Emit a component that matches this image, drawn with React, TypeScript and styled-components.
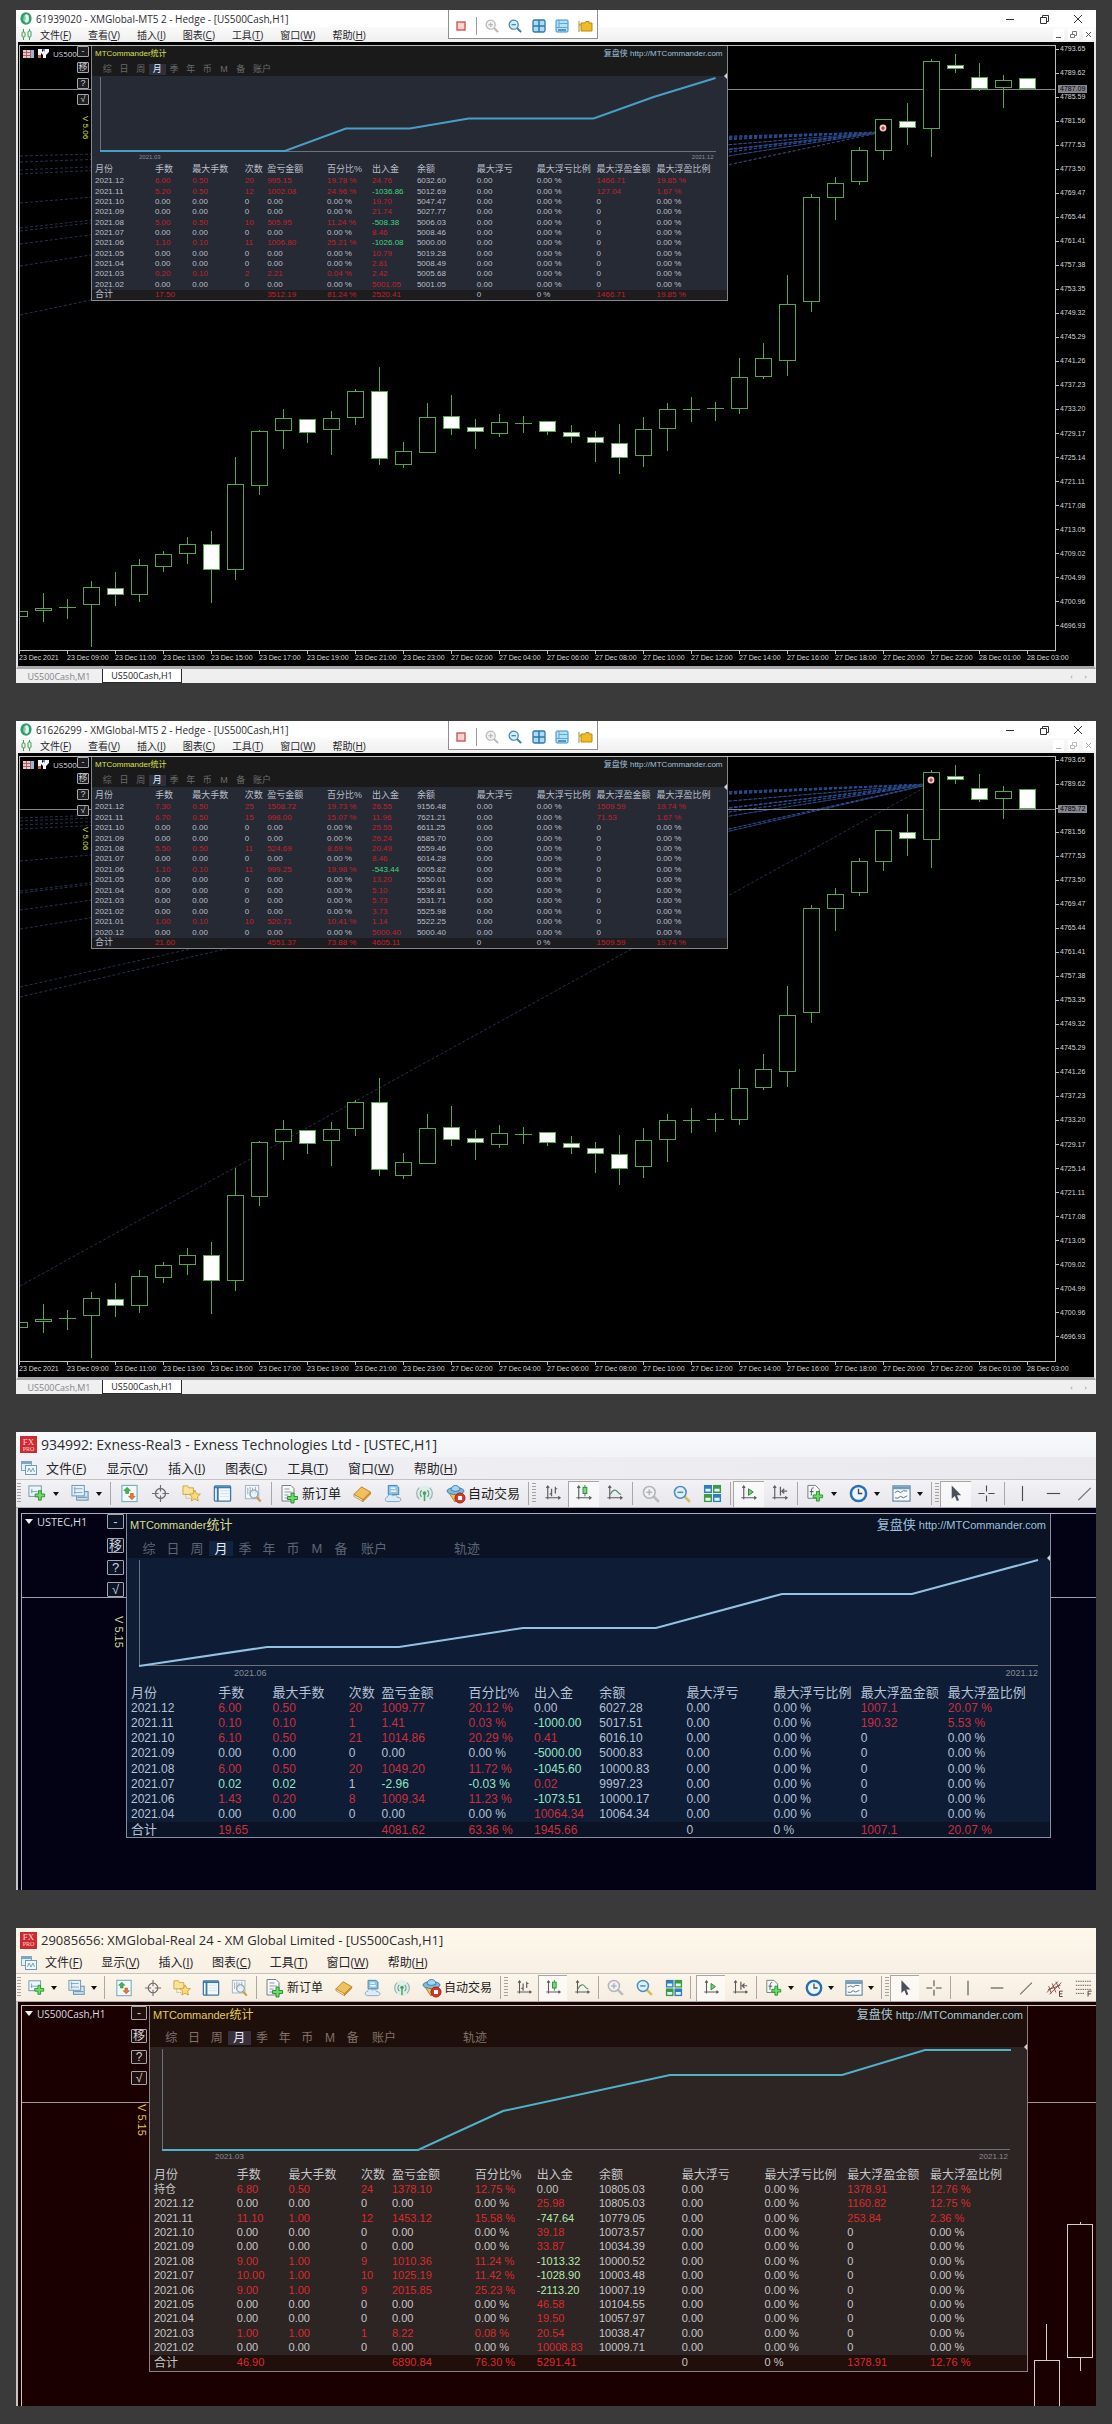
import React from 'react';
import styled, { createGlobalStyle, css } from 'styled-components';

const UI = '"Open Sans", "Noto Sans CJK SC", sans-serif';
const DATA = '"Liberation Sans", "Noto Sans CJK SC", sans-serif';

const GlobalStyle = createGlobalStyle`
  * { box-sizing: border-box; }
  body { margin: 0; background: #3a3a3b; font-family: ${UI}; }
  button { font: inherit; color: inherit; border: 0; padding: 0; margin: 0; background: none; cursor: pointer; }
  a { color: inherit; text-decoration: none; }
  svg { display: block; }
`;

/* ---------- themes ---------- */

interface Skin {
  titleH: number; titleFont: number; titleBg: string;
  menuH: number; menuFont: number; menuGap: number; menuIconW: number; menuBg: string;
  bg: string; grid: string;
  panelHead: string; panelBody: string; panelFoot: string; panelLine: string;
  text: string; red: string; green: string; accent: string; tab: string; tabOnBg: string; link: string; curve: string;
  font: number; headFont: number; brandFont: number; cjkFont: number; axisFont: number;
  brandH: number; tabsGap: number; tabsH: number; tabsW: number; tabsPad: number; tabsAfter: number;
  curveH: number; curveLabelH: number; theadGap: number; theadH: number; tbodyH: number; tfootH: number;
  labelLeft: number; labelRight: number; cellPad: number;
  sideW: number; toolW: number; toolH: number; toolGap: number; toolFirst: number; verGap: number; verFont: number; tagFont: number;
}

const mt5: Skin = {
  titleH: 17, titleFont: 10, titleBg: '#ffffff',
  menuH: 15, menuFont: 10, menuGap: 17, menuIconW: 15, menuBg: 'linear-gradient(#fafafa, #efefef)',
  bg: '#000000', grid: '#c4c4c4',
  panelHead: '#1a1a1b', panelBody: '#262a34', panelFoot: '#1d1d20', panelLine: '#83868d',
  text: '#b9bec9', red: '#c4202a', green: '#3fd67c', accent: '#dbe04c', tab: '#6b6b6d', tabOnBg: '#2b3040', link: '#9fc0dc', curve: '#479fc6',
  font: 8, headFont: 9, brandFont: 8, cjkFont: 8, axisFont: 6,
  brandH: 16, tabsGap: 0, tabsH: 14, tabsW: 150, tabsPad: 7, tabsAfter: 4,
  curveH: 77, curveLabelH: 8, theadGap: 2, theadH: 13, tbodyH: 114, tfootH: 10,
  labelLeft: 47, labelRight: 13, cellPad: 3,
  sideW: 71, toolW: 12, toolH: 11, toolGap: 5, toolFirst: 0, verGap: 11, verFont: 8, tagFont: 8,
};
const mt5b: Skin = { ...mt5, tbodyH: 136 };

const exness: Skin = {
  titleH: 25, titleFont: 14, titleBg: 'linear-gradient(#f8f9fa, #f2f3f6)',
  menuH: 22, menuFont: 13, menuGap: 20, menuIconW: 21, menuBg: 'linear-gradient(90deg, #f1f1f5, #e9e9ee)',
  bg: '#020214', grid: '#a9adb8',
  panelHead: '#0b1224', panelBody: '#0e1c35', panelFoot: '#0b1327', panelLine: '#868da0',
  text: '#b6c2d6', red: '#cc2f3c', green: '#93e6c4', accent: '#d9dc92', tab: '#5b6577', tabOnBg: '#10233f', link: '#9cc0de', curve: '#93c2e2',
  font: 12, headFont: 13, brandFont: 11, cjkFont: 13, axisFont: 9,
  brandH: 20, tabsGap: 4, tabsH: 20, tabsW: 216, tabsPad: 10, tabsAfter: 8,
  curveH: 110, curveLabelH: 11, theadGap: 5, theadH: 16, tbodyH: 122, tfootH: 15,
  labelLeft: 107, labelRight: 12, cellPad: 4,
  sideW: 104, toolW: 17, toolH: 15, toolGap: 7, toolFirst: 2, verGap: 19, verFont: 11, tagFont: 11,
};
const xm: Skin = {
  ...exness,
  titleH: 24, titleFont: 13, titleBg: 'linear-gradient(#fdf8ea, #fbf5e8)',
  menuH: 21, menuFont: 12, menuGap: 19, menuIconW: 20, menuBg: 'linear-gradient(#faf3e6, #f8f0e4)',
  bg: '#1b0001', grid: '#cfc5bf',
  panelHead: '#1f0f0a', panelBody: '#2d2424', panelFoot: '#210f0c', panelLine: '#8d7f7f',
  text: '#c6c6c8', red: '#dc2a2c', green: '#b4ecb0', accent: '#e4cc58', tab: '#80726c', tabOnBg: '#37303a', link: '#a9cbd6', curve: '#4fb3c8',
  font: 11, headFont: 12, brandFont: 11, cjkFont: 12, axisFont: 8,
  brandH: 18, tabsGap: 4, tabsH: 19, tabsW: 204, tabsPad: 10, tabsAfter: 8,
  curveH: 105, curveLabelH: 10, theadGap: 5, theadH: 15, tbodyH: 173, tfootH: 16,
  labelLeft: 65, labelRight: 19,
  sideW: 127, toolW: 16, toolH: 14, toolFirst: 2, tagFont: 10,
};

interface S { $s: Skin }

/* ---------- window shell ---------- */

const Page = styled.main`
  display: flex;
  flex-direction: column;
  gap: 38px;
  padding: 10px 16px 18px;
`;
const Win = styled.section`
  position: relative;
  display: flex;
  flex-direction: column;
`;
const TitleBar = styled.header<S>`
  display: flex;
  align-items: center;
  height: ${p => p.$s.titleH}px;
  padding: 0 12px 0 4px;
  background: ${p => p.$s.titleBg};
  color: #2c2c30;
  font-size: ${p => p.$s.titleFont}px;
  white-space: nowrap;
`;
const TitleText = styled.h1`
  flex: 1;
  margin: 0 0 0 4px;
  font: inherit;
`;
const WinButtons = styled.div`
  display: flex;
  gap: 22px;
  button { width: 12px; height: 12px; }
`;
const MenuBar = styled.nav<S>`
  display: flex;
  align-items: center;
  height: ${p => p.$s.menuH}px;
  padding-left: 4px;
  background: ${p => p.$s.menuBg};
  color: #26262a;
  font-size: ${p => p.$s.menuFont}px;
  line-height: 1;
  white-space: nowrap;
`;
const MenuIcon = styled.span<S>`
  width: ${p => p.$s.menuIconW}px;
  margin-right: 5px;
`;
const MenuList = styled.div<S>`
  display: flex;
  gap: ${p => p.$s.menuGap}px;
`;
const MdiButtons = styled.div`
  display: flex;
  gap: 4px;
  margin-left: auto;
  padding-right: 2px;
  button { width: 11px; height: 11px; background: #fff; }
`;

const MENUS5 = [['文件', 'F'], ['查看', 'V'], ['插入', 'I'], ['图表', 'C'], ['工具', 'T'], ['窗口', 'W'], ['帮助', 'H']];
const MENUS4 = MENUS5.map(m => (m[0] === '查看' ? ['显示', 'V'] : m));

function Menus({ items, s }: { items: string[][]; s: Skin }) {
  return (
    <MenuList $s={s}>
      {items.map(([t, k]) => (
        <button key={k}>{t}(<u>{k}</u>)</button>
      ))}
    </MenuList>
  );
}

/* ---------- statistics panel ---------- */

const Panel = styled.div<S & { $w?: string }>`
  ${p => (p.$w ? css`width: ${p.$w};` : css`flex: 1;`)}
  min-width: 0;
  border: 1px solid ${p => p.$s.panelLine};
  border-top: 0;
  background: ${p => p.$s.panelBody};
  color: ${p => p.$s.text};
  font-family: ${DATA};
  align-self: flex-start;
`;
const PanelHead = styled.div<S>`
  display: flex;
  flex-direction: column;
  gap: ${p => p.$s.tabsGap}px;
  background: ${p => p.$s.panelHead};
`;
const Brand = styled.div<S>`
  display: flex;
  align-items: center;
  justify-content: space-between;
  height: ${p => p.$s.brandH}px;
  padding: 0 4px 0 3px;
  font-size: ${p => p.$s.brandFont}px;
  line-height: 1;
  strong { font-weight: 400; color: ${p => p.$s.accent}; }
  a { color: ${p => p.$s.link}; }
  span { font-size: ${p => p.$s.cjkFont}px; }
`;
const Periods = styled.div<S>`
  display: flex;
  align-items: center;
  height: ${p => p.$s.tabsH}px;
  padding-left: ${p => p.$s.tabsPad}px;
  color: ${p => p.$s.tab};
  font-size: ${p => p.$s.headFont}px;
  line-height: 1;
`;
const PeriodGrid = styled.div<S>`
  display: grid;
  grid-template-columns: repeat(9, 1fr);
  width: ${p => p.$s.tabsW}px;
`;
const Period = styled.button<S & { $on?: boolean }>`
  line-height: 1;
  padding: 1px 0;
  ${p => p.$on && css`color: #e8edf6; background: ${p.$s.tabOnBg};`}
`;
const PeriodWide = styled.button<{ $gap: number }>`
  line-height: 1;
  margin-left: ${p => p.$gap}px;
`;
const CurveBox = styled.div<S>`
  height: ${p => p.$s.curveH}px;
  svg { width: 100%; height: 100%; }
`;
const CurveLabels = styled.div<S>`
  display: flex;
  justify-content: space-between;
  height: ${p => p.$s.curveLabelH}px;
  padding: 0 ${p => p.$s.labelRight}px 0 ${p => p.$s.labelLeft}px;
  color: #888d98;
  font-size: ${p => p.$s.axisFont}px;
  line-height: ${p => p.$s.curveLabelH}px;
`;
const Stats = styled.table<S>`
  width: 100%;
  margin-top: ${p => p.$s.theadGap}px;
  table-layout: fixed;
  border-collapse: collapse;
  font-size: ${p => p.$s.font}px;
  line-height: 1;
  white-space: nowrap;
  th, td {
    padding: 0 0 0 ${p => p.$s.cellPad}px;
    text-align: left;
    font-weight: 400;
    vertical-align: middle;
  }
  thead th { height: ${p => p.$s.theadH}px; font-size: ${p => p.$s.headFont}px; }
  tfoot { background: ${p => p.$s.panelFoot}; }
  tfoot tr { height: ${p => p.$s.tfootH}px; }
  tfoot th { font-size: ${p => p.$s.headFont}px; }
`;
const Body = styled.tbody<S & { $rows: number }>`
  tr { height: calc(${p => p.$s.tbodyH}px / ${p => p.$rows}); }
`;
const Cell = styled.td<S & { $tone: 'up' | 'down' | 'flat' }>`
  color: ${p => (p.$tone === 'up' ? p.$s.red : p.$tone === 'down' ? p.$s.green : p.$s.text)};
`;

const COLS = ['月份', '手数', '最大手数', '次数', '盈亏金额', '百分比%', '出入金', '余额', '最大浮亏', '最大浮亏比例', '最大浮盈金额', '最大浮盈比例'];
const UNITS = [8, 5, 7, 3, 8, 6, 6, 8, 8, 8, 8];

type Tone = 'up' | 'down' | 'flat';
const sign = (v: string): Tone => {
  const n = parseFloat(v);
  return n > 0 ? 'up' : n < 0 ? 'down' : 'flat';
};
function toneOf(row: string[], i: number): Tone {
  if (i === 0 || i === 7) return 'flat';
  if (i <= 3 && sign(row[4]) === 'down') return i === 3 ? 'flat' : 'down';
  return sign(row[i]);
}

/* month | lots | max lots | trades | profit | percent | deposit | balance | max float profit | its percent */
const parse = (lines: string[]): string[][] =>
  lines.map(line => {
    const [m, a, b, c, d, e, f, g, h, k] = line.split('|');
    return [m, a, b, c, d, `${e} %`, f, g, '0.00', '0.00 %', h || '0', `${k || '0.00'} %`];
  });
const idle = (m: string, dep: string, bal: string, rest = '') => `${m}|0.00|0.00|0|0.00|0.00|${dep}|${bal}${rest}`;

const ROWS1 = parse([
  '2021.12|6.00|0.50|20|995.15|19.78|24.76|6032.60|1466.71|19.85',
  '2021.11|5.20|0.50|12|1002.08|24.96|-1036.86|5012.69|127.04|1.67',
  idle('2021.10', '19.70', '5047.47'),
  idle('2021.09', '21.74', '5027.77'),
  '2021.08|5.00|0.50|10|505.95|11.24|-508.38|5006.03',
  idle('2021.07', '8.46', '5008.46'),
  '2021.06|1.10|0.10|11|1006.80|25.21|-1026.08|5000.00',
  idle('2021.05', '10.79', '5019.28'),
  idle('2021.04', '2.81', '5008.49'),
  '2021.03|0.20|0.10|2|2.21|0.04|2.42|5005.68',
  idle('2021.02', '5001.05', '5001.05'),
]);
const ROWS2 = parse([
  '2021.12|7.30|0.50|25|1508.72|19.73|26.55|9156.48|1509.59|19.74',
  '2021.11|6.70|0.50|15|998.00|15.07|11.96|7621.21|71.53|1.67',
  idle('2021.10', '25.55', '6611.25'),
  idle('2021.09', '26.24', '6585.70'),
  '2021.08|5.50|0.50|11|524.69|8.69|20.49|6559.46',
  idle('2021.07', '8.46', '6014.28'),
  '2021.06|1.10|0.10|11|999.25|19.98|-543.44|6005.82',
  idle('2021.05', '13.20', '5550.01'),
  idle('2021.04', '5.10', '5536.81'),
  idle('2021.03', '5.73', '5531.71'),
  idle('2021.02', '3.73', '5525.98'),
  '2021.01|1.00|0.10|10|520.71|10.41|1.14|5522.25',
  idle('2020.12', '5000.40', '5000.40'),
]);
const ROWS3 = parse([
  '2021.12|6.00|0.50|20|1009.77|20.12|0.00|6027.28|1007.1|20.07',
  '2021.11|0.10|0.10|1|1.41|0.03|-1000.00|5017.51|190.32|5.53',
  '2021.10|6.10|0.50|21|1014.86|20.29|0.41|6016.10',
  idle('2021.09', '-5000.00', '5000.83'),
  '2021.08|6.00|0.50|20|1049.20|11.72|-1045.60|10000.83',
  '2021.07|0.02|0.02|1|-2.96|-0.03|0.02|9997.23',
  '2021.06|1.43|0.20|8|1009.34|11.23|-1073.51|10000.17',
  idle('2021.04', '10064.34', '10064.34'),
]);
const ROWS4 = parse([
  '持仓|6.80|0.50|24|1378.10|12.75|0.00|10805.03|1378.91|12.76',
  idle('2021.12', '25.98', '10805.03', '|1160.82|12.75'),
  '2021.11|11.10|1.00|12|1453.12|15.58|-747.64|10779.05|253.84|2.36',
  idle('2021.10', '39.18', '10073.57'),
  idle('2021.09', '33.87', '10034.39'),
  '2021.08|9.00|1.00|9|1010.36|11.24|-1013.32|10000.52',
  '2021.07|10.00|1.00|10|1025.19|11.42|-1028.90|10003.48',
  '2021.06|9.00|1.00|9|2015.85|25.23|-2113.20|10007.19',
  idle('2021.05', '46.58', '10104.55'),
  idle('2021.04', '19.50', '10057.97'),
  '2021.03|1.00|1.00|1|8.22|0.08|20.54|10038.47',
  idle('2021.02', '10008.83', '10009.71'),
]);
const total = (lots: string, pl: string, pct: string, dep: string, mx: string, mp: string) =>
  ['合计', lots, '', '', pl, `${pct} %`, dep, '', '0', '0 %', mx, `${mp} %`];

interface Curve { box: string; axis: string; line: string; from: string; to: string }

interface PanelProps { s: Skin; rows: string[][]; sum: string[]; width?: string; curve?: Curve; track?: boolean }

const MarkWrap = styled.div`
  position: relative;
`;
const Mark = styled.i`
  position: absolute;
  right: 0;
  top: -3px;
  border: 3px solid transparent;
  border-left-width: 0;
  border-right-color: #d5d5dc;
`;

function StatsPanel({ s, rows, sum, width, curve, track }: PanelProps) {
  return (
    <Panel $s={s} $w={width}>
      <PanelHead $s={s}>
        <Brand $s={s}>
          <strong>MTCommander<span>统计</span></strong>
          <a href="http://MTCommander.com"><span>复盘侠</span> http://MTCommander.com</a>
        </Brand>
        <Periods $s={s}>
          <PeriodGrid $s={s}>
            {[...'综日周月季年币M备'].map(t => (
              <Period key={t} $s={s} $on={t === '月'}>{t}</Period>
            ))}
          </PeriodGrid>
          <PeriodWide $gap={s.tabsAfter}>账户</PeriodWide>
          {track && <PeriodWide $gap={67}>轨迹</PeriodWide>}
        </Periods>
      </PanelHead>
      <MarkWrap><Mark /></MarkWrap>
      {curve && (
        <>
          <CurveBox $s={s}>
            <svg viewBox={curve.box} preserveAspectRatio="none">
              <polyline points={curve.axis} fill="none" stroke="#6c717b" vectorEffect="non-scaling-stroke" shapeRendering="crispEdges" />
              <polyline points={curve.line} fill="none" stroke={s.curve} strokeWidth="2" vectorEffect="non-scaling-stroke" />
            </svg>
          </CurveBox>
          <CurveLabels $s={s}><span>{curve.from}</span><span>{curve.to}</span></CurveLabels>
        </>
      )}
      <Stats $s={s}>
        <colgroup>
          {UNITS.map((u, i) => <col key={i} style={{ width: `${u * 1.18}%` }} />)}
          <col />
        </colgroup>
        <thead>
          <tr>{COLS.map(c => <th key={c} scope="col">{c}</th>)}</tr>
        </thead>
        <Body $s={s} $rows={rows.length}>
          {rows.map(r => (
            <tr key={r[0]}>{r.map((v, i) => <Cell key={i} $s={s} $tone={toneOf(r, i)}>{v}</Cell>)}</tr>
          ))}
        </Body>
        <tfoot>
          <tr>
            <th scope="row">{sum[0]}</th>
            {sum.slice(1).map((v, i) => <Cell key={i} $s={s} $tone={sign(v)}>{v}</Cell>)}
          </tr>
        </tfoot>
      </Stats>
    </Panel>
  );
}

/* ---------- left side of the chart ---------- */

const Side = styled.div<S>`
  display: flex;
  flex: none;
  width: ${p => p.$s.sideW}px;
  padding-right: 2px;
`;
const SymbolTag = styled.div<S>`
  display: flex;
  flex: 1;
  align-items: center;
  gap: 4px;
  align-self: flex-start;
  height: 15px;
  padding-left: 3px;
  min-width: 0;
  color: #dcdce0;
  font-size: ${p => p.$s.tagFont}px;
  white-space: nowrap;
  svg { flex: none; }
`;
const ToolStack = styled.div<S>`
  display: flex;
  flex-direction: column;
  align-items: flex-end;
  gap: ${p => p.$s.toolGap}px;
`;
const ToolBtn = styled.button<S & { $first?: boolean }>`
  width: ${p => p.$s.toolW}px;
  height: ${p => p.$s.toolH}px;
  margin-bottom: ${p => (p.$first ? p.$s.toolFirst : 0)}px;
  border: 1px solid #a4a6ae;
  border-radius: 1px;
  background: ${p => p.$s.panelFoot};
  color: #ced0d8;
  font-family: ${DATA};
  font-size: ${p => p.$s.headFont}px;
  line-height: 1;
  display: flex;
  align-items: center;
  justify-content: center;
`;
const Version = styled.span<S>`
  margin-top: ${p => p.$s.verGap - p.$s.toolGap}px;
  color: ${p => p.$s.accent};
  font-family: ${DATA};
  font-size: ${p => p.$s.verFont}px;
  line-height: 1;
  writing-mode: vertical-rl;
`;

function Tools({ s, ver }: { s: Skin; ver: string }) {
  return (
    <ToolStack $s={s}>
      <ToolBtn $s={s} $first>-</ToolBtn>
      <ToolBtn $s={s}>移</ToolBtn>
      <ToolBtn $s={s}>?</ToolBtn>
      <ToolBtn $s={s}>√</ToolBtn>
      <Version $s={s}>{ver}</Version>
    </ToolStack>
  );
}

/* ---------- MT5 chart ---------- */

const Frame5 = styled.div`
  display: grid;
  grid-template-columns: minmax(0, 1fr) 38px;
  padding: 3px 0 0 1px;
  border: solid #e4e4e6;
  border-width: 0 2px 3px 2px;
  border-bottom-color: #a6a6a8;
  background: #000;
`;
const Plot5 = styled.div`
  position: relative;
  min-height: 606px;
  border: 1px solid #bdbdbd;
`;
const Canvas = styled.svg`
  position: absolute;
  inset: 0;
  width: 100%;
  height: 100%;
`;
const Over = styled.div<{ $right?: number }>`
  position: relative;
  display: flex;
  padding-right: ${p => p.$right || 0}px;
`;
const PriceAxis = styled.div`
  position: relative;
  display: flex;
  flex-direction: column;
  justify-content: space-between;
  padding-bottom: 21px;
  color: #d6d6d6;
  font: 7px/8px ${DATA};
`;
const Price = styled.span`
  display: flex;
  align-items: center;
  gap: 1px;
  &::before { content: ''; width: 3px; height: 1px; background: #bdbdbd; }
`;
const PriceBadge = styled.span<{ $top: number }>`
  position: absolute;
  left: 2px;
  top: ${p => p.$top}px;
  padding: 0 2px;
  background: #85858f;
  color: #000;
`;
const TimeAxis = styled.div`
  display: flex;
  height: 15px;
  color: #d6d6d6;
  font: 7px/8px ${DATA};
  white-space: nowrap;
`;
const Time = styled.span`
  flex: none;
  width: calc(100% * 48 / 1037);
  &::before { content: ''; display: block; width: 1px; height: 3px; background: #bdbdbd; }
`;
const ChartTabs = styled.div`
  display: flex;
  height: 14px;
  background: #efeff0;
  font-size: 9px;
  line-height: 13px;
`;
const ChartTab = styled.button<{ $on?: boolean }>`
  width: ${p => (p.$on ? 80 : 86)}px;
  line-height: 13px;
  color: ${p => (p.$on ? '#1c1c1e' : '#85858a')};
  ${p => p.$on && css`background: #fff; border: solid #2a2a2a; border-width: 0 1px 1px 1px;`}
`;
const Scrollers = styled.span`
  display: flex;
  gap: 12px;
  margin-left: auto;
  padding-right: 9px;
  color: #8b8b8e;
  font-size: 8px;
  line-height: 13px;
`;

/* high, body top, body bottom, low, filled; one candle per 24 units */
type Candle = [number, number, number, number, number];
const CANDLES: Candle[] = [
  [611, 611, 617, 617, 0], [593, 608, 611, 622, 0], [599, 607, 607, 619, 0], [581, 587, 605, 647, 0],
  [572, 588, 595, 606, 1], [559, 565, 595, 602, 0], [551, 554, 567, 572, 0], [537, 544, 554, 564, 0],
  [531, 544, 570, 603, 1], [457, 484, 570, 580, 0], [430, 431, 486, 495, 0], [409, 418, 431, 449, 0],
  [419, 419, 433, 443, 1], [411, 418, 430, 455, 0], [389, 391, 418, 425, 0], [367, 391, 459, 465, 1],
  [442, 451, 465, 468, 0], [403, 417, 453, 453, 0], [395, 416, 429, 435, 1], [419, 427, 432, 449, 1],
  [414, 422, 434, 437, 0], [416, 423, 423, 433, 0], [421, 421, 432, 435, 1], [425, 432, 437, 443, 1],
  [431, 437, 443, 462, 1], [424, 443, 458, 474, 1], [417, 429, 456, 467, 0], [403, 409, 429, 451, 0],
  [397, 409, 409, 422, 0], [402, 408, 408, 421, 0], [358, 377, 409, 414, 0], [343, 358, 377, 379, 0],
  [275, 304, 361, 376, 0], [194, 197, 302, 312, 0], [177, 183, 198, 220, 0], [147, 150, 182, 185, 0],
  [119, 119, 151, 160, 0], [103, 121, 128, 145, 1], [59, 61, 129, 157, 0], [54, 65, 69, 73, 1],
  [63, 77, 89, 91, 1], [75, 80, 88, 108, 0],
];
const PRICES = Array.from({ length: 25 }, (_, i) => (4793.65 - i * 4.03).toFixed(2));
const TIMES = ['23 Dec 2021', '23 Dec 09:00', '23 Dec 11:00', '23 Dec 13:00', '23 Dec 15:00', '23 Dec 17:00', '23 Dec 19:00',
  '23 Dec 21:00', '23 Dec 23:00', '27 Dec 02:00', '27 Dec 04:00', '27 Dec 06:00', '27 Dec 08:00', '27 Dec 10:00',
  '27 Dec 12:00', '27 Dec 14:00', '27 Dec 16:00', '27 Dec 18:00', '27 Dec 20:00', '27 Dec 22:00', '28 Dec 01:00', '28 Dec 03:00'];

interface Mt5Props {
  title: string; s: Skin; rows: string[][]; sum: string[]; curve?: Curve;
  last: Candle; priceY: number; price: string; mark: [number, number]; rays: number[]; faint?: boolean;
}

const FloatBar = styled.div`
  position: absolute;
  top: 0;
  left: 40%;
  display: flex;
  align-items: center;
  justify-content: space-around;
  width: 150px;
  height: 29px;
  padding-top: 4px;
  background: #fff;
  border: 1px solid #8f8f92;
  border-top: 0;
  i { width: 1px; height: 18px; background: #9a9a9c; }
  button { width: 16px; height: 16px; display: flex; align-items: center; justify-content: center; }
`;

function FloatTools() {
  return (
    <FloatBar>
      <button aria-label="停止"><svg width="10" height="10"><rect x="1" y="1" width="8" height="8" fill="#fbd3cd" stroke="#c75a55" strokeWidth="1.4" /></svg></button>
      <i />
      <button aria-label="放大"><Lens size={14} color="#b9b9bb" fill="#f1f1f1" plus handle="#b9b9bb" /></button>
      <button aria-label="缩小"><Lens size={14} color="#3d82ac" fill="#d3effb" handle="#3d82ac" /></button>
      <button aria-label="平铺">
        <svg width="14" height="14"><rect x="1" y="1" width="12" height="12" rx="1.5" fill="#a9dbf5" stroke="#2f78a8" strokeWidth="1.3" /><path d="M7 1v12M1 7h12" stroke="#2f78a8" strokeWidth="1.5" /></svg>
      </button>
      <button aria-label="窗口">
        <svg width="14" height="14"><rect x="1" y="1" width="12" height="12" rx="1" fill="#b5e0f6" stroke="#3b8fc2" /><path d="M1 8.5h12M4 1v7M4 4.5h9" stroke="#5aa8d6" /><path d="M3 11h8" stroke="#2f78a8" strokeWidth="1.4" /></svg>
      </button>
      <button aria-label="文件夹">
        <svg width="15" height="14"><path d="M1 2v11M1 6h3" stroke="#a58a2c" /><path d="M3 4h4l1-1.5h3V4h3v8H3z" fill="#f0bb23" stroke="#b98a14" /></svg>
      </button>
    </FloatBar>
  );
}

function Lens({ size, color, fill, plus, handle }: { size: number; color: string; fill: string; plus?: boolean; handle: string }) {
  return (
    <svg width={size} height={size} viewBox="0 0 16 16">
      <path d="M10 10l5 5" stroke={handle} strokeWidth="2.4" />
      <circle cx="6.5" cy="6.5" r="5.2" fill={fill} stroke={color} strokeWidth="1.4" />
      <path d={plus ? 'M4 6.5h5M6.5 4v5' : 'M4 6.5h5'} stroke={color} strokeWidth="1.4" />
    </svg>
  );
}

function Mt5Window(p: Mt5Props) {
  const candles = [...CANDLES, p.last];
  return (
    <Win>
      <TitleBar $s={p.s}>
        <svg width="12" height="13" viewBox="0 0 12 13">
          <ellipse cx="6" cy="6.5" rx="5.6" ry="6.2" fill="#2f9e6b" />
          <ellipse cx="6.6" cy="6.5" rx="2.3" ry="4.3" fill="#e9faf1" />
          <path d="M4 3l2 2-1 5-2-2z" fill="#7fd0a8" />
        </svg>
        <TitleText>{p.title}</TitleText>
        <WinButtons>
          <button aria-label="最小化"><svg width="12" height="12"><path d="M2 6.5h8" stroke="#333" /></svg></button>
          <button aria-label="还原"><svg width="12" height="12"><path d="M2.5 4.5h6v6h-6zM4.5 4V2.5h6v6H9" fill="none" stroke="#333" /></svg></button>
          <button aria-label="关闭"><svg width="12" height="12"><path d="M2 2l8 8M10 2l-8 8" stroke="#333" /></svg></button>
        </WinButtons>
      </TitleBar>
      <MenuBar $s={p.s}>
        <MenuIcon $s={p.s}>
          <svg width="13" height="11"><path d="M3.5 0v11M9.5 0v11" stroke="#3aa14a" /><rect x="2" y="3" width="3" height="5" rx="1" fill="#f3f3f3" stroke="#3aa14a" /><rect x="8" y="2" width="3" height="6" rx="1" fill="#f3f3f3" stroke="#3aa14a" /></svg>
        </MenuIcon>
        <Menus items={MENUS5} s={p.s} />
        <MdiButtons>
          <button aria-label="最小化图表"><svg width="11" height="11"><path d="M3 8.5h5" stroke={p.faint ? '#aaa' : '#555'} /></svg></button>
          <button aria-label="还原图表"><svg width="11" height="11"><path d="M2.5 5.5h4v3h-4zM4.5 5V2.5h4v4H7" fill="none" stroke={p.faint ? '#bbb' : '#777'} /></svg></button>
          <button aria-label="关闭图表"><svg width="11" height="11"><path d="M3 3l5 5M8 3l-5 5" stroke={p.faint ? '#aaa' : '#555'} /></svg></button>
        </MdiButtons>
      </MenuBar>
      <FloatTools />
      <Frame5>
        <Plot5>
          <Canvas viewBox="20 46 1035 604" preserveAspectRatio="none">
            {p.rays.map((y, i) => (
              <g key={i} strokeDasharray="3 2">
                <line x1="20" y1={y} x2={p.mark[0]} y2={p.mark[1]} stroke="#26304f" />
                {y < 400 && <line x1="729" y1={p.mark[1] + (y - p.mark[1]) * (p.mark[0] - 729) / (p.mark[0] - 20)} x2={p.mark[0]} y2={p.mark[1]} stroke={y > 290 ? '#33426c' : '#27509e'} />}
              </g>
            ))}
            <path d={`M20 ${p.priceY}.5H1055`} stroke="#85868a" shapeRendering="crispEdges" />
            <g stroke="#56a84d" shapeRendering="crispEdges">
              {candles.map(([h, t, b, l, f], i) => {
                const x = 19 + i * 24;
                return (
                  <g key={i}>
                    {h < t && <path d={`M${x}.5 ${h}V${t}`} />}
                    {l > b && <path d={`M${x}.5 ${b}V${l}`} />}
                    {t === b
                      ? <path d={`M${x - 8} ${t}.5H${x + 9}`} />
                      : <rect x={x - 7.5} y={t + 0.5} width="16" height={b - t - 1 || 1} fill={f ? '#ffffff' : '#000000'} />}
                  </g>
                );
              })}
            </g>
            <circle cx={p.mark[0]} cy={p.mark[1] - 4} r="3.4" fill="#f0cfc6" />
            <path d={`M${p.mark[0]} ${p.mark[1] - 6}l2 2-2 2.6-2-2.6z`} fill="#b4473c" />
          </Canvas>
          <Over>
            <Side $s={p.s}>
              <SymbolTag $s={p.s}>
                <svg width="11" height="8"><rect width="11" height="8" fill="#e7c7c7" /><path d="M0 2.5h11M0 5.5h11M3.5 0v8M7.5 0v8" stroke="#b0606a" /><rect x="8" width="3" height="8" fill="#8fb6d8" /></svg>
                <svg width="11" height="9"><path d="M0 0h4v3l3-3h4v3L8 6v3H5V6L3 4v5H0z" fill="#f2f4f6" /><path d="M4 0l3 3V0z" fill="#4c8fd0" /><path d="M0 6h3v3H0z" fill="#d0504c" /></svg>
                US500C
              </SymbolTag>
              <Tools s={p.s} ver="V 5.06" />
            </Side>
            <StatsPanel s={p.s} rows={p.rows} sum={p.sum} curve={p.curve} width="61.5%" />
          </Over>
        </Plot5>
        <PriceAxis>
          {PRICES.map(v => <Price key={v}>{v}</Price>)}
          <PriceBadge $top={p.priceY - 49}>{p.price}</PriceBadge>
        </PriceAxis>
        <TimeAxis>
          {TIMES.map(t => <Time key={t}>{t}</Time>)}
        </TimeAxis>
      </Frame5>
      <ChartTabs>
        <ChartTab>US500Cash,M1</ChartTab>
        <ChartTab $on>US500Cash,H1</ChartTab>
        <Scrollers><span>‹</span><span>›</span></Scrollers>
      </ChartTabs>
    </Win>
  );
}

/* ---------- MT4 toolbar ---------- */

const Bar = styled.div<{ $tint: string }>`
  display: flex;
  align-items: center;
  height: 29px;
  overflow: hidden;
  background: ${p => p.$tint};
  border-top: 1px solid #c5c2c0;
  border-bottom: 1px solid #b0adab;
`;
const IconBtn = styled.button<{ $w: number; $on?: boolean }>`
  flex: none;
  display: flex;
  align-items: center;
  justify-content: center;
  width: ${p => p.$w}px;
  height: 26px;
  ${p => p.$on && css`background: #ffffff90; box-shadow: inset 1px 1px 0 #a9a6a4;`}
`;
const CaretBtn = styled.button<{ $w: number }>`
  flex: none;
  width: ${p => p.$w}px;
  height: 26px;
  &::before {
    content: '';
    display: block;
    width: 0;
    border: 3px solid transparent;
    border-top: 4px solid #111;
    border-bottom: 0;
  }
`;
const LabelBtn = styled.button<{ $font: number }>`
  flex: none;
  display: flex;
  align-items: center;
  gap: 2px;
  height: 26px;
  padding: 0 6px;
  color: #1d1d20;
  font-size: ${p => p.$font}px;
  line-height: 1;
  white-space: nowrap;
`;
const Sep = styled.i<{ $w: number }>`
  flex: none;
  width: ${p => p.$w}px;
  height: 23px;
  background: linear-gradient(90deg, transparent 2px, #aaa7a6 2px, #aaa7a6 3px, transparent 3px);
`;
const Grip = styled.i`
  flex: none;
  width: 6px;
  height: 21px;
  background: repeating-linear-gradient(#a5a2a0 0 1px, transparent 1px 3px);
  background-clip: content-box;
  padding: 0 1px;
`;

const Plus = ({ x, y }: { x: number; y: number }) => (
  <path d={`M${x} ${y - 5}h3v3.5h3.5v3H${x + 3}v3.5h-3v-3.5h-3.5v-3H${x}z`} fill="#6ddc62" stroke="#1d8a2c" strokeWidth=".9" />
);
const axes = <path d="M5 2v14M2.5 14.5H18M3.5 4L5 2l1.5 2M16 13l2 1.5-2 1.5" fill="none" stroke="#5c5c5e" strokeWidth="1.2" />;

const ICONS: Record<string, React.ReactNode> = {
  newChart: <><rect x="1" y="2" width="13" height="11" fill="#eef6fb" stroke="#6f93ad" /><path d="M4 5v5M3 8h7" stroke="#7da3bd" /><Plus x={11} y={12} /></>,
  profiles: <><rect x="6" y="8" width="12" height="9" fill="#cfe2f1" stroke="#5f89a9" /><rect x="1" y="1.5" width="13" height="11" fill="#e6f1f9" stroke="#6b93b0" /><path d="M3 5h9M3 9h9M4 3v8" stroke="#7ea5c0" /><path d="M7 14h10" stroke="#5f89a9" /></>,
  watch: <><rect x="2" y="1.5" width="16" height="17" fill="#f1faf6" stroke="#7fb2c9" strokeWidth="1.3" /><path d="M7.5 3.500l3.500 3.500H9v3H6V7H4z" fill="#43b452" stroke="#258237" strokeWidth=".6" /><path d="M12.500 16.500L9 13h2v-3h3v3h2z" fill="#e8743b" stroke="#b54d20" strokeWidth=".6" /></>,
  cross: <><circle cx="10" cy="10" r="5.3" fill="none" stroke="#6c6f74" strokeWidth="1.4" /><path d="M10 1v7M10 12v7M1 10h7M12 10h7" stroke="#6c6f74" strokeWidth="1.2" /></>,
  favorites: <><path d="M1 2h5l1 2h5v7H1z" fill="#fbe39a" stroke="#caa64a" /><path d="M4 11v4h5" fill="none" stroke="#b9a06a" strokeDasharray="1 1" /><path d="M13.5 6.5l1.8 3.8 4 .5-3 2.8.8 4.2-3.6-2-3.7 2 .8-4.2-3-2.8 4.1-.5z" fill="#fbdc74" stroke="#c99a35" strokeWidth=".9" /></>,
  terminal: <><rect x="1.5" y="2" width="17" height="16" rx="1" fill="#f4f9fd" stroke="#3c78a8" strokeWidth="1.4" /><path d="M1.5 3.5h17" stroke="#3c78a8" strokeWidth="2" /><path d="M5 3v15" stroke="#3c78a8" strokeWidth="2" /><path d="M7.5 7h9M7.5 10h9M7.5 13h9" stroke="#cfe0ec" /></>,
  tester: <><rect x="1.5" y="1.5" width="14" height="14" fill="#f4f7f9" stroke="#9bb3c4" /><path d="M4 4v7M6.5 3v9M9 4v6M12 3v7" stroke="#9aa9b3" /><path d="M13.5 14l4 4.5" stroke="#c9a03e" strokeWidth="2.4" /><circle cx="10.5" cy="10.5" r="4.2" fill="#e5f0f8b0" stroke="#8aa0b0" strokeWidth="1.2" /></>,
  order: <><path d="M2 1.5h9l3 3V17H2z" fill="#f6f8fa" stroke="#75808a" /><path d="M4.5 5h5M4.5 8h7M4.5 11h4M4.5 14h3" stroke="#8d98a2" strokeWidth="1.2" /><Plus x={11} y={14} /></>,
  book: <><path d="M1 11l8-8 9.5 5.5-8 8z" fill="#f0c05a" stroke="#b98028" /><path d="M1 11l9.5 5.5v2L1 13z" fill="#fbf0cf" stroke="#b98028" strokeWidth=".8" /><path d="M10.5 18.5l8-8v-2l-8 8z" fill="#d49a3c" stroke="#b98028" strokeWidth=".8" /></>,
  cloud: <><path d="M4.5 1.5h9l2 2V11h-11z" fill="#8cc4ea" stroke="#3c82b8" /><path d="M7 4.5h5M7 7.5h6" stroke="#fff" strokeWidth="1.4" /><path d="M4 18.5c-3.500 0-3.500-4.500-.3-4.700.4-3 4.300-3.600 5.500-1.200 1.900-1.800 4.800-.6 4.900 1.500 4.600-.4 4.700 4.400 1.300 4.400z" fill="#dcebf6" stroke="#7fa5c4" /></>,
  signal: <><circle cx="10" cy="10" r="8.5" fill="#dfeee8" /><path d="M4.5 4a8 8 0 000 12M15.5 4a8 8 0 010 12" fill="none" stroke="#9fb4bb" strokeWidth="1.4" /><path d="M7 6.5a5 5 0 000 7M13 6.5a5 5 0 010 7" fill="none" stroke="#62a08c" strokeWidth="1.4" /><circle cx="10" cy="9.5" r="2" fill="#4aa065" /><path d="M10 10v8" stroke="#4aa065" strokeWidth="1.6" /></>,
  auto: <><path d="M3 9l6 9 8-7z" fill="#f2c04c" stroke="#b98028" /><ellipse cx="9.5" cy="7" rx="8.5" ry="3.5" fill="#7fbbe0" stroke="#3f82ae" /><path d="M5 6c0-6 9-6 9 0-2 1.800-7 1.800-9 0z" fill="#a4d4ef" stroke="#3f82ae" /><circle cx="14" cy="14" r="5" fill="#d8392b" stroke="#a32318" /><rect x="12" y="12" width="4" height="4" fill="#fff" /></>,
  bars: <>{axes}<path d="M9 5v8M9 10.5H7M13 3v7M13 5h2" stroke="#5c5c5e" strokeWidth="1.3" /></>,
  candle: <>{axes}<path d="M11.5 1v12" stroke="#2a8a3a" /><rect x="9.5" y="3.5" width="4" height="6.5" fill="#7ed878" stroke="#2a8a3a" /></>,
  line: <>{axes}<path d="M5.5 11c3-6 6-5 7.500-3s2 2.500 4 3" fill="none" stroke="#4d8e5a" strokeWidth="1.2" /></>,
  tiles: <><rect x="1" y="1" width="8.5" height="8.5" fill="#2f7fc0" /><rect x="10.5" y="1" width="8.5" height="8.5" fill="#3a9a48" /><rect x="1" y="10.5" width="8.5" height="8.5" fill="#3a9a48" /><rect x="10.5" y="10.5" width="8.5" height="8.5" fill="#2f7fc0" /><path d="M2.5 5h5.500v3H2.500zM12 5h5.500v3H12zM2.500 14.500h5.500v3H2.500zM12 14.500h5.500v3H12z" fill="#e6f4ee" /></>,
  scroll: <>{axes}<path d="M10 5l5 3.500-5 3.500z" fill="#6fd06a" stroke="#2a8a3a" /></>,
  shift: <>{axes}<path d="M11 3v9M18 7.500h-5M15 5l-2.500 2.500L15 10" fill="none" stroke="#5c5c5e" strokeWidth="1.3" /></>,
  indicators: <><path d="M2 1.5h8l4 4V15H2z" fill="#f3f6f4" stroke="#6d7f77" /><path d="M8 4c-3 0-2 3-2.500 8M4 8h4" fill="none" stroke="#47505a" /><Plus x={11} y={13} /></>,
  clock: <><circle cx="10" cy="10" r="8" fill="#eef6fd" stroke="#2b6fae" strokeWidth="2.6" /><path d="M10 5v5h4" fill="none" stroke="#3b4a58" strokeWidth="1.4" /></>,
  template: <><rect x="1" y="2" width="18" height="16" fill="#f7fafc" stroke="#5f8298" strokeWidth="1.2" /><path d="M1 4h18" stroke="#6c9cba" strokeWidth="3" /><path d="M3 9l3-1.500 3 1.500 3-2 4 .5M3 14.500l3 .5 3-2 3 1.500 4-2" fill="none" stroke="#5b6a74" /></>,
  cursor: <path d="M6 1.5v14l3.300-3 2.200 5.500 2.200-1-2.200-5.200H16z" fill="#48505c" />,
  crosshair: <path d="M10 1.5v6.500M10 12v6.500M1.500 10H8M12 10h6.500" stroke="#4c4c4e" strokeWidth="1.2" />,
  vline: <path d="M10 2v16" stroke="#4c4c4e" strokeWidth="1.2" />,
  hline: <path d="M3 10h14" stroke="#4c4c4e" strokeWidth="1.2" />,
  trend: <path d="M3.5 17L16.500 4" stroke="#6c6c6e" strokeWidth="1.2" />,
  channel: <><path d="M1 15L13 3M4 17L17 4M3 8l3 8M7 5l4 10M11 3l4 8M2 12l14-5" stroke="#7a4a42" /><path d="M18.500 13.500H15v6h3.500M15 16.500h3" fill="none" stroke="#5a4440" strokeWidth="1.1" /></>,
  fibo: <><path d="M1 2.500h17M1 7h17M1 11.500h17M1 16h10" stroke="#5a4440" strokeDasharray="1.5 1" /><path d="M18.500 13.500H14.500v6M14.500 16.500h3" fill="none" stroke="#5a4440" strokeWidth="1.1" /></>,
};
const HINT: Record<string, string> = {
  newChart: '新图表', profiles: '配置', watch: '市场报价', cross: '数据窗口', favorites: '导航', terminal: '终端', tester: '测试',
  book: '编辑器', cloud: '云', signal: '信号', bars: '柱状图', candle: '蜡烛图', line: '折线图', zin: '放大', zout: '缩小', tiles: '平铺',
  scroll: '自动滚动', shift: '图表平移', indicators: '指标', clock: '周期', template: '模板', cursor: '光标', crosshair: '十字线',
  vline: '垂直线', hline: '水平线', trend: '趋势线', channel: '通道', fibo: '斐波那契',
};

function Glyph({ name, size }: { name: string; size: number }) {
  if (name === 'zin') return <Lens size={size - 1} color="#b2b4b8" fill="#f0f1f3" plus handle="#bcbcbe" />;
  if (name === 'zout') return <Lens size={size - 1} color="#4d8fc0" fill="#dff0fb" handle="#d4bc62" />;
  return <svg width={size} height={size} viewBox="0 0 20 20">{ICONS[name]}</svg>;
}

function Toolbar({ w, caret, font, tint, firstSep, midSep, size, extra }: {
  w: number; caret: number; font: number; tint: string; firstSep: number; midSep: number; size: number; extra?: boolean;
}) {
  const b = (n: string, on?: boolean) => <IconBtn key={n} $w={w} $on={on} aria-label={HINT[n]}><Glyph name={n} size={size} /></IconBtn>;
  const drop = (n: string) => <React.Fragment key={n}>{b(n)}<CaretBtn $w={caret} aria-label={`${HINT[n]}菜单`} /></React.Fragment>;
  return (
    <Bar $tint={tint}>
      <Grip />
      {drop('newChart')}{drop('profiles')}
      <Sep $w={firstSep} />
      {['watch', 'cross', 'favorites', 'terminal', 'tester'].map(n => b(n))}
      <Sep $w={5} />
      <LabelBtn $font={font}><Glyph name="order" size={20} />新订单</LabelBtn>
      {['book', 'cloud', 'signal'].map(n => b(n))}
      <LabelBtn $font={font}><Glyph name="auto" size={20} />自动交易</LabelBtn>
      <Sep $w={5} /><Grip />
      {b('bars')}{b('candle', true)}{b('line')}
      <Sep $w={5} />
      {['zin', 'zout', 'tiles'].map(n => b(n))}
      <Sep $w={midSep} />
      {b('scroll', true)}{b('shift')}
      <Sep $w={5} />
      {['indicators', 'clock', 'template'].map(drop)}
      <Sep $w={5} /><Grip />
      {b('cursor', true)}{b('crosshair')}
      <Sep $w={5} />
      {['vline', 'hline', 'trend'].map(n => b(n))}
      {extra && ['channel', 'fibo'].map(n => b(n))}
    </Bar>
  );
}

/* ---------- MT4 window ---------- */

const Logo = styled.span`
  display: flex;
  flex-direction: column;
  align-items: center;
  justify-content: center;
  width: 17px;
  height: 17px;
  background: #cf2a30;
  color: #f8d3d3;
  font: 9px/8px "Liberation Serif", serif;
  small { font-size: 6px; line-height: 6px; }
`;
const Frame4 = styled.div<{ $top: number; $bg: string }>`
  padding: ${p => p.$top}px 0 0 3px;
  border-left: 2px solid #c6c4c8;
  background: ${p => p.$bg};
`;
const Plot4 = styled.div<S & { $h: number }>`
  position: relative;
  min-height: ${p => p.$h}px;
  border: solid ${p => p.$s.grid};
  border-width: 1px 0 0 1px;
  background: ${p => p.$s.bg};
`;
const Down = styled.i`
  flex: none;
  border: 4px solid transparent;
  border-top: 5px solid #f0f0f0;
  border-bottom: 0;
`;

interface Mt4Props {
  title: string; s: Skin; symbol: string; rows: string[][]; sum: string[]; curve: Curve;
  top: number; h: number; right: number; box: string; art: React.ReactNode; bar: React.ReactNode;
}

function Mt4Window(p: Mt4Props) {
  return (
    <Win>
      <TitleBar $s={p.s}>
        <Logo>FX<small>PRO</small></Logo>
        <TitleText>{p.title}</TitleText>
      </TitleBar>
      <MenuBar $s={p.s}>
        <MenuIcon $s={p.s}>
          <svg width="18" height="16" viewBox="0 0 18 16"><rect x="1.5" y="1.5" width="10" height="9" fill="#e3f0f8" stroke="#7fa6c0" /><path d="M1.5 3h10" stroke="#7fa6c0" strokeWidth="2" /><rect x="5.5" y="5.5" width="11" height="9" fill="#edf6fb" stroke="#6f9ab8" /><path d="M7.5 12l1.500-4 2 4 2-4 1.500 4" fill="none" stroke="#7aa3bf" /></svg>
        </MenuIcon>
        <Menus items={MENUS4} s={p.s} />
      </MenuBar>
      {p.bar}
      <Frame4 $top={p.top} $bg={p.s.bg}>
        <Plot4 $s={p.s} $h={p.h}>
          <Canvas viewBox={p.box} preserveAspectRatio="none">{p.art}</Canvas>
          <Over $right={p.right}>
            <Side $s={p.s}>
              <SymbolTag $s={p.s}><Down />{p.symbol}</SymbolTag>
              <Tools s={p.s} ver="V 5.15" />
            </Side>
            <StatsPanel s={p.s} rows={p.rows} sum={p.sum} curve={p.curve} track />
          </Over>
        </Plot4>
      </Frame4>
    </Win>
  );
}

const CURVE1: Curve = {
  box: '93 76 635 77', axis: '101.5,77 101.5,151.5 717,151.5', from: '2021.03', to: '2021.12',
  line: '101,151 286,151 347,128.5 411,128.5 470,118.5 595,118.5 655,97 717,78',
};
const CURVE3: Curve = {
  box: '127 1558 923 110', axis: '139.5,1560 139.5,1665.5 1038,1665.5', from: '2021.06', to: '2021.12',
  line: '139,1666 267,1647 399,1647 523,1628 656,1628 782,1594 912,1594 1038,1560',
};
const CURVE4: Curve = {
  box: '150 2046 877 105', axis: '162.5,2048 162.5,2148.5 1010,2148.5', from: '2021.03', to: '2021.12',
  line: '162,2149 418,2149 503,2110 670,2074 842,2074 925,2049 1011,2049',
};

export default function App() {
  return (
    <>
      <GlobalStyle />
      <Page>
        <Mt5Window
          title="61939020 - XMGlobal-MT5 2 - Hedge - [US500Cash,H1]"
          s={mt5} rows={ROWS1} curve={CURVE1}
          sum={total('17.50', '3512.19', '81.24', '2520.41', '1466.71', '19.85')}
          last={[78, 78, 89, 89, 1]} priceY={89} price="4787.09" mark={[883, 132]}
          rays={[156, 162, 170, 174, 203, 228, 231, 244, 266, 315]}
        />
        <Mt5Window
          title="61626299 - XMGlobal-MT5 2 - Hedge - [US500Cash,H1]"
          s={mt5b} rows={ROWS2} faint
          sum={total('21.60', '4551.37', '73.88', '4605.11', '1509.59', '19.74')}
          last={[78, 78, 98, 98, 1]} priceY={98} price="4785.72" mark={[931, 73]}
          rays={[107, 110, 114, 118, 150, 180, 182, 199, 218, 276, 286, 575]}
        />
        <Mt4Window
          title="934992: Exness-Real3 - Exness Technologies Ltd - [USTEC,H1]"
          s={exness} symbol="USTEC,H1" rows={ROWS3} curve={CURVE3}
          sum={total('19.65', '4081.62', '63.36', '1945.66', '1007.1', '20.07')}
          top={5} h={377} right={45} box="22 1514 1074 376"
          art={<path d="M22 1597.5H1096" stroke="#9a9eaa" shapeRendering="crispEdges" />}
          bar={<Toolbar w={31} caret={12} font={13} size={19} firstSep={6} midSep={5} tint="linear-gradient(#f3f3f6, #e6e6ec)" />}
        />
        <Mt4Window
          title="29085656: XMGlobal-Real 24 - XM Global Limited - [US500Cash,H1]"
          s={xm} symbol="US500Cash,H1" rows={ROWS4} curve={CURVE4}
          sum={total('46.90', '6890.84', '76.30', '5291.41', '1378.91', '12.76')}
          top={3} h={401} right={68} box="22 2005 1074 400"
          art={
            <g stroke="#d4cfc8" fill="none" shapeRendering="crispEdges">
              <path d="M22 2101.5H1096" stroke="#a09591" />
              <path d="M1034.5 2410V2359.5h25V2410M1046.5 2323v36" />
              <path d="M1067.5 2223.5h25v133h-25zM1080.5 2221v2M1080.5 2357v13" />
            </g>
          }
          bar={<Toolbar w={29} caret={11} font={12} size={18} firstSep={7} midSep={8} tint="linear-gradient(#fbf5ea, #f5ede2)" extra />}
        />
      </Page>
    </>
  );
}
